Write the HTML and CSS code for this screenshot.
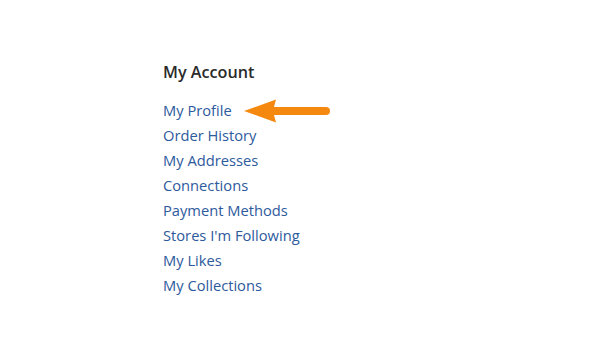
FILE: index.html
```html
<!DOCTYPE html>
<html lang="en">
<head>
  <meta charset="UTF-8">
  <title>My Account</title>
  <link rel="stylesheet" href="styles.css">
</head>
<body>

  <div class="konto">
    <h2>My Account</h2>
    <ul class="menu">
      <li class="aktywny">
        <a href="#">My Profile</a>
        <svg class="strzalka" width="90" height="26" viewBox="0 0 90 26">
          <path d="M0 13 L32 1.5 L30 9 L82 9 Q86 9 86 13 Q86 17 82 17 L30 17 L32 24.5 Z" fill="#f5880f"/>
        </svg>
      </li>
      <li><a href="#">Order History</a></li>
      <li><a href="#">My Addresses</a></li>
      <li><a href="#">Connections</a></li>
      <li><a href="#">Payment Methods</a></li>
      <li><a href="#">Stores I'm Following</a></li>
      <li><a href="#">My Likes</a></li>
      <li><a href="#">My Collections</a></li>
    </ul>
  </div>

</body>
</html>
```

FILE: styles.css
```css
body {
  margin: 0;
  background: #ffffff;
  font-family: 'Open Sans', 'Liberation Sans', sans-serif;
}

.konto {
  padding: 58px 0 0 163px;
}

h2 {
  margin: 0 0 12px 0;
  font-size: 16.2px;
  line-height: 28px;
  font-weight: 600;
  color: #2a2a2a;
}

.menu {
  list-style: none;
  margin: 0;
  padding: 0;
}

.menu li {
  line-height: 25px;
  font-size: 14.7px;
}

.menu a {
  color: #2d5a9c;
  text-decoration: none;
}

.aktywny {
  position: relative;
}

.strzalka {
  position: absolute;
  left: 81px;
  top: 0;
}
```
